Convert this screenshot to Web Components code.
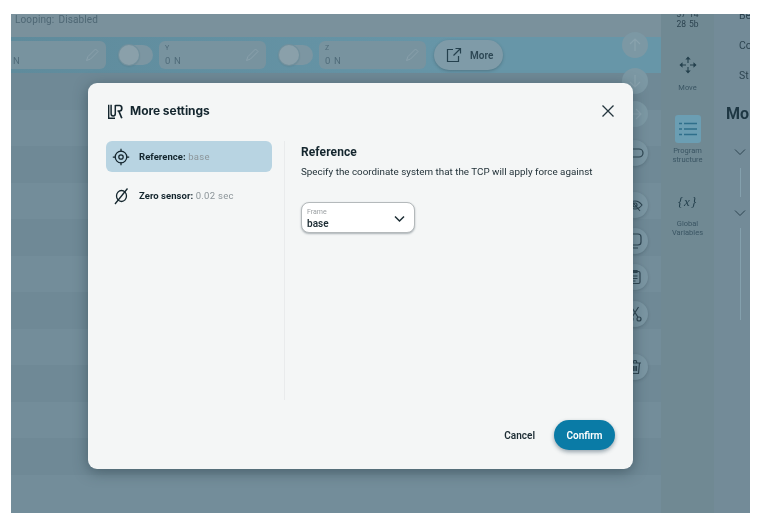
<!DOCTYPE html>
<html lang="en"><head><meta charset="utf-8"><title>More settings</title>
<style>
html,body{margin:0;height:100%;background:#fff}
body{padding:14px 8px 12px 11px;box-sizing:border-box;font-family:Roboto,"Liberation Sans",sans-serif;width:758px;height:525px;overflow:hidden}
svg{display:block}
</style></head><body>
<ur-app>
  <ur-field slot="fields" class="first" value="N"></ur-field>
  <ur-toggle slot="fields"></ur-toggle>
  <ur-field slot="fields" label="Y" value="0 N"></ur-field>
  <ur-toggle slot="fields"></ur-toggle>
  <ur-field slot="fields" label="Z" value="0 N"></ur-field>
  <ur-more slot="fields"></ur-more>

  <ur-fab slot="fabs" top="0" faint><svg width="16" height="16" viewBox="0 0 16 16" fill="none" stroke="#8aa3ae" stroke-width="1.200"><path d="M8 14V2M3 7l5-5 5 5"/></svg></ur-fab>
  <ur-fab slot="fabs" top="10" faint><svg width="16" height="16" viewBox="0 0 16 16" fill="none" stroke="#8aa3ae" stroke-width="1.200"><path d="M8 2v12M3 9l5 5 5-5"/></svg></ur-fab>
  <ur-fab slot="fabs" top="7" faint><svg width="16" height="16" viewBox="0 0 16 16" fill="none" stroke="#8aa3ae" stroke-width="1.200"><path d="M2 8h12M9 3l5 5-5 5"/></svg></ur-fab>
  <ur-fab slot="fabs" top="13"><svg width="18" height="18" viewBox="0 0 18 18" fill="none" stroke="#2d4450" stroke-width="1.200"><rect x="1" y="5" width="16" height="8" rx="4"/></svg></ur-fab>
  <ur-fab slot="fabs" top="26"><svg width="16" height="16" viewBox="0 0 16 16" fill="none" stroke="#2d4450" stroke-width="1.100"><path d="M1 8s3-4 7-4 7 4 7 4-3 4-7 4-7-4-7-4z"/><circle cx="8" cy="8" r="2"/><path d="M3 2l10 12"/></svg></ur-fab>
  <ur-fab slot="fabs" top="10"><svg width="16" height="16" viewBox="0 0 16 16" fill="none" stroke="#2d4450" stroke-width="1.200"><rect x="3" y="1" width="11" height="11" rx="3"/><path d="M3 9v2a4 4 0 0 0 4 4h4"/></svg></ur-fab>
  <ur-fab slot="fabs" top="10"><svg width="16" height="16" viewBox="0 0 16 16" fill="none" stroke="#2d4450" stroke-width="1.200"><rect x="3" y="2.500" width="10" height="12" rx="1.500"/><path d="M6 1.500h4v2H6zM5.500 7h5M5.500 9.500h5M5.500 12h3"/></svg></ur-fab>
  <ur-fab slot="fabs" top="11"><svg width="16" height="16" viewBox="0 0 16 16" fill="none" stroke="#2d4450" stroke-width="1.200"><circle cx="4" cy="13" r="2"/><circle cx="12" cy="13" r="2"/><path d="M5 11.300 11.500 1M11 11.300 4.500 1"/></svg></ur-fab>
  <ur-fab slot="fabs" top="27"><svg width="16" height="16" viewBox="0 0 16 16" fill="none" stroke="#2d4450" stroke-width="1.200"><path d="M2 4h12M6 4l1-2.500h2L10 4M3.500 4l1 10.500h7l1-10.500M6.500 7v5M8 7v5M9.500 7v5" /></svg></ur-fab>

  <ur-rail slot="rail"></ur-rail>
  <ur-side slot="side"></ur-side>

  <ur-dialog slot="dialog" heading="More settings">
    <ur-nav slot="nav" active label="Reference:" value="base">
      <svg slot="icon" width="18" height="18" viewBox="0 0 18 18" fill="none" stroke="#14262e" stroke-width="1.250"><circle cx="9" cy="9" r="5.800"/><circle cx="9" cy="9" r="2.200"/><path d="M9 .8v3M9 14.200v3M.8 9h3M14.200 9h3"/></svg>
    </ur-nav>
    <ur-nav slot="nav" label="Zero sensor:" value="0.02 sec">
      <svg slot="icon" width="18" height="18" viewBox="0 0 18 18" fill="none" stroke="#14262e" stroke-width="1.300"><ellipse cx="9.500" cy="9" rx="5" ry="5.500"/><path d="M3 17 15.500 1.500"/></svg>
    </ur-nav>
    <h3 slot="content-title">Reference</h3>
    <p slot="content-text">Specify the coordinate system that the TCP will apply force against</p>
    <ur-select slot="content-control" label="Frame" value="base"></ur-select>
  </ur-dialog>
</ur-app>

<script>
function def(name, css, html, extra){
  customElements.define(name, class extends HTMLElement{
    constructor(){super();this.attachShadow({mode:'open'});}
    connectedCallback(){
      const a=n=>this.getAttribute(n)||'';
      this.shadowRoot.innerHTML='<style>'+css+'</style>'+(typeof html==='function'?html(a,this):html);
      if(extra)extra(this,a);
    }
  });
}

def('ur-app',`
:host{display:block;position:relative;width:739px;height:499px;overflow:hidden;background:#728b98;color:#2d4450;filter:blur(.45px)}
.shell{display:grid;grid-template-columns:650px 53px 36px;height:100%}
.main{display:flex;flex-direction:column;position:relative;overflow:hidden}
.status{height:23px;background:#7a919c;font-size:10px;line-height:11px;color:#4f6875;padding-left:4px;letter-spacing:.12px;box-sizing:border-box;word-spacing:1.500px}
.band{height:36px;background:linear-gradient(90deg,#5f8b9c,#6796a8 70%);display:flex;align-items:center;box-sizing:border-box}
.rows{flex:1;display:flex;flex-direction:column}
.rows i{display:block;height:36.500px;flex:none}
.rows i:nth-child(odd){background:#6f8996}
.rows i:nth-child(even){background:#738d9a}
.rows i.end{flex:1}
.fabs{position:absolute;left:611px;top:18px;display:flex;flex-direction:column}
.dlg{position:absolute;left:77px;top:69px}
`,`<div class="shell"><div class="main">
<div class="status">Looping:&nbsp;Disabled</div>
<div class="band"><slot name="fields"></slot></div>
<div class="rows"><i></i><i></i><i></i><i></i><i></i><i></i><i></i><i></i><i></i><i></i><i></i><i class="end"></i></div>
<div class="fabs"><slot name="fabs"></slot></div>
</div><slot name="rail"></slot><slot name="side"></slot></div>
<div class="dlg"><slot name="dialog"></slot></div>`);

def('ur-field',`
:host{display:block;width:107px;height:28px;flex:none;background:#78939f;border-radius:6px;box-sizing:border-box;padding:3px 0 0 6px;position:relative;color:#4f6b79;font-size:9px;letter-spacing:.7px}
:host(.first){width:95px;border-radius:0 6px 6px 0;padding-left:2px;}
.l{font-size:7px;line-height:8px;height:8px}
.v{line-height:11px;margin-top:3px;font-size:9.500px}
svg{position:absolute;right:6px;top:6px}
`,a=>`<div class="l">${a('label')}</div><div class="v">${a('value')}</div>
<svg width="15" height="15" viewBox="0 0 15 15" fill="none" stroke="#8aa1ac" stroke-width="1"><path d="M1.500 13.500 3 9.500 10.500 2l2.500 2.500L5.500 12z"/></svg>`);

def('ur-toggle',`
:host{display:block;width:34px;height:20px;flex:none;margin:0 6px 0 13px;border-radius:10px;background:#7c96a2;position:relative}
i{position:absolute;left:0;top:0;width:20px;height:20px;border-radius:50%;background:#8aa0aa;box-shadow:0 0 0 1px #71909d,0 1px 2px rgba(40,60,70,.3)}
`,`<i></i>`);

def('ur-more',`
:host{display:flex;align-items:center;gap:8px;box-sizing:border-box;width:69px;height:30px;flex:none;margin-left:8px;border-radius:15px;background:#7f9ba8;padding-left:12px;font-size:10px;font-weight:600;color:#2d4754;box-shadow:0 1px 3px rgba(40,60,70,.35)}
`,`<svg width="16" height="16" viewBox="0 0 16 16" fill="none" stroke="#24404d" stroke-width="1.200"><path d="M7 2.500H1.500v12h11V9M7.500 8.500 14 2M9.500 1.500H14.500V6.500"/></svg><span>More</span>`);

def('ur-fab',`
:host{display:flex;align-items:center;justify-content:center;width:26px;height:26px;flex:none;border-radius:50%;background:#7b96a3;box-shadow:0 1px 3px rgba(40,60,70,.25)}
:host([faint]){background:#7c98a4;box-shadow:none}
`,`<slot></slot>`,(el,a)=>{el.style.marginTop=a('top')+'px';});

def('ur-rail',`
:host{display:flex;flex-direction:column;align-items:center;background:#708993;font-size:7.500px;line-height:9px;text-align:center;color:#3a5563;height:100%;box-sizing:border-box;overflow:hidden}
.time{margin-top:-5px;font-size:8.500px;line-height:10px;color:#2d4450;word-spacing:1px}
.item{display:flex;flex-direction:column;align-items:center}
.sq{width:26px;height:28px;border-radius:3px;background:#6b9eb3;display:flex;align-items:center;justify-content:center}
`,`<div class="time">37 14<br>28 5b</div>
<div class="item" style="margin-top:27px"><svg width="18" height="18" viewBox="0 0 18 18" fill="none" stroke="#24404d" stroke-width="1.100"><path d="M9 3v4M9 11v4M3 9h4M11 9h4"/><path d="M7.500 3 9 1.300 10.500 3zM7.500 15 9 16.700 10.500 15zM3 7.500 1.300 9 3 10.500zM15 7.500 16.700 9 15 10.500z" fill="#24404d"/></svg><span style="margin-top:9px">Move</span></div>
<div class="item" style="margin-top:23px"><div class="sq"><svg width="18" height="14" viewBox="0 0 18 14" fill="none" stroke="#2f6f8b" stroke-width="1.300"><path d="M0 1.500h3M5 1.500h13M0 7h3M5 7h13M0 12.500h3M5 12.500h13"/></svg></div><span style="margin-top:3px">Program<br>structure</span></div>
<div class="item" style="margin-top:30px"><span style="font:italic 13px 'Liberation Serif',serif;line-height:16px;letter-spacing:1px;color:#24404d">{x}</span><span style="margin-top:9px">Global<br>Variables</span></div>`);

def('ur-side',`
:host{display:block;background:#738b98;height:100%;overflow:hidden;position:relative;font-size:10.500px;color:#2d4450;box-sizing:border-box}
.t{line-height:12px;white-space:nowrap;padding-left:25px}
.h{font-size:16px;font-weight:700;line-height:20px;padding-left:12px;color:#1e3743;margin-top:22px}
.c{margin-left:20px}
.ln{width:1px;background:#84a0ad;margin-left:26px}
`,`<div class="t" style="margin-top:-4px">Be</div><div class="t" style="margin-top:18px">Co</div><div class="t" style="margin-top:18px">St</div>
<div class="h">Mo</div>
<svg class="c" style="margin-top:24px" width="12" height="8" viewBox="0 0 12 8" fill="none" stroke="#2d4450" stroke-width="1"><path d="M1 1.500 6 6.500 11 1.500"/></svg>
<div class="ln" style="height:29px;margin-top:9px"></div>
<svg class="c" style="margin-top:12px" width="12" height="8" viewBox="0 0 12 8" fill="none" stroke="#2d4450" stroke-width="1"><path d="M1 1.500 6 6.500 11 1.500"/></svg>
<div class="ln" style="height:92px;margin-top:8px"></div>`);

def('ur-dialog',`
:host{display:flex;flex-direction:column;box-sizing:border-box;width:545px;height:386px;background:#f4f6f6;border-radius:9px;box-shadow:0 3px 14px rgba(35,55,65,.5);color:#14262e;padding:20px 18px 19px 18px}
header{display:flex;align-items:center;height:16px;padding-left:2px;gap:7px;font:700 12px/16px Inter,Roboto,sans-serif;letter-spacing:-.05px}
.x{margin-left:auto}
.body{flex:1;display:grid;grid-template-columns:179px 1fr;margin-top:22px;min-height:0}
.nav{display:flex;flex-direction:column;gap:8px;border-right:1px solid #e9ebec;padding-right:12px;height:259px;box-sizing:border-box}
.content{padding-left:16px}
::slotted(h3){margin:3px 0 0;font:700 12px/16px Roboto,sans-serif;letter-spacing:.1px}
::slotted(p){margin:5px 0 0;font:400 9.800px/14px Roboto,sans-serif;letter-spacing:.02px;color:#1d2d34}
.ctl{margin-top:23px}
footer{display:flex;justify-content:flex-end;align-items:center;gap:19px;height:30px}
`,a=>`<header>
<svg width="15" height="15" viewBox="0 0 15 15" fill="none" stroke="#14262e"><path d="M.7 .8v13.500H7" stroke-width="1.400"/><path d="M3.100 .8V9.500Q3.100 12 5.200 12T7.300 9.500V1" stroke-width="1.500"/><path d="M7.300 1.500H11.600Q13.800 1.500 13.800 4.200T11.600 7H9.500M10.800 7l3 7.300" stroke-width="1.700"/></svg>
<span>${a('heading')}</span>
<svg class="x" width="14" height="14" viewBox="0 0 14 14" fill="none" stroke="#24363e" stroke-width="1.300"><path d="M1.500 1.500l11 11M12.500 1.500l-11 11"/></svg></header>
<div class="body"><div class="nav"><slot name="nav"></slot></div>
<div class="content"><slot name="content-title"></slot><slot name="content-text"></slot><div class="ctl"><slot name="content-control"></slot></div></div></div>
<footer><ur-button>Cancel</ur-button><ur-button primary>Confirm</ur-button></footer>`);

def('ur-nav',`
:host{display:flex;align-items:center;height:31px;border-radius:6px;padding-left:6px;gap:9px;font-size:9.500px;letter-spacing:.05px;white-space:nowrap;box-sizing:border-box}
:host([active]){background:#b8d4e2}
b{font-weight:700;color:#14262e}
span{color:#8c9599;letter-spacing:.3px}
`,a=>`<slot name="icon"></slot><div><b>${a('label')}</b> <span>${a('value')}</span></div>`);

def('ur-select',`
:host{display:flex;align-items:center;justify-content:space-between;box-sizing:border-box;width:114px;height:31px;background:#fff;border:1px solid #b4b9bb;border-radius:8px;box-shadow:0 1px 2px rgba(30,50,60,.35);padding:2px 9px 0 5px}
.l{font-size:7px;line-height:9px;color:#9a9fa2}
.v{font-size:10px;line-height:12px;font-weight:600;color:#1d2d34;margin-top:1px}
`,a=>`<div><div class="l">${a('label')}</div><div class="v">${a('value')}</div></div>
<svg width="11" height="8" viewBox="0 0 11 8" fill="none" stroke="#1d2d34" stroke-width="1.500"><path d="M1 1.500 5.500 6 10 1.500"/></svg>`);

def('ur-button',`
:host{display:flex;align-items:center;justify-content:center;height:30px;font-size:10px;font-weight:600;color:#1d2d34}
:host([primary]){width:61px;border-radius:15px;background:#0a7ba6;color:#fff;box-shadow:0 2px 4px rgba(30,60,80,.45)}
`,`<slot></slot>`);
</script>
</body></html>
